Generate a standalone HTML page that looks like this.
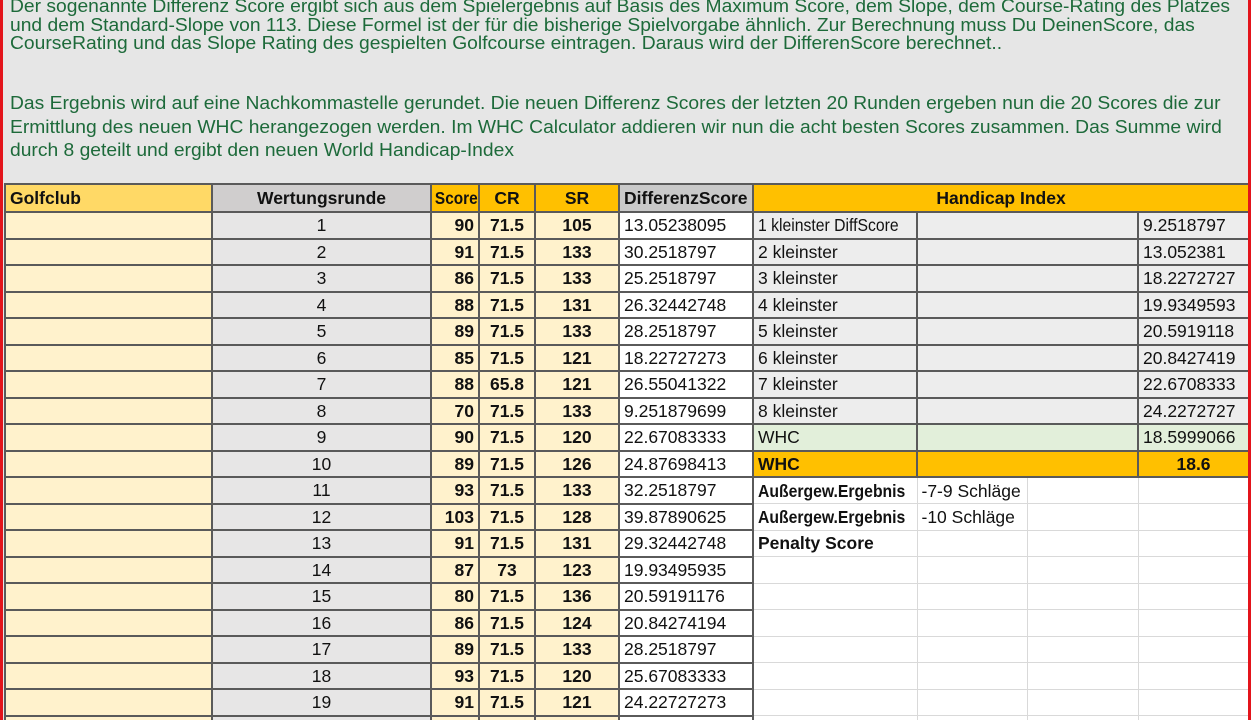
<!DOCTYPE html>
<html><head><meta charset="utf-8"><style>
html,body{margin:0;padding:0;width:1251px;height:720px;overflow:hidden;background:#e6e6e6;position:relative;font-family:"Liberation Sans",Arial,sans-serif}
.red{position:absolute;top:0;bottom:0;width:3px;background:#e3141b;z-index:5}
.t{position:absolute;left:10px;color:#1d6a3a;font-size:18px;white-space:nowrap;line-height:19px;transform-origin:0 0;transform:scaleX(1.07)}
table{position:absolute;left:4px;top:183px;border-collapse:collapse;table-layout:fixed;width:1244px}
td{border:2px solid #5a5a5a;padding:0 4px;height:24.5px;font-size:17.5px;white-space:nowrap;overflow:hidden;line-height:20px;color:#111;vertical-align:middle}
tr.h td{height:26px;font-weight:bold}
.y{background:#fff2cc}.g{background:#e7e6e6}.w{background:#fff}.o{background:#ffc000}.lg{background:#ededed}.gr{background:#e2efda}
.c{text-align:center}.r{text-align:right}.b{font-weight:bold}
td.l{border-color:#d9d9d9;border-width:1px;background:#fff}
.n{display:inline-block;transform-origin:0 50%;transform:scaleX(.9)}
.nc{display:inline-block;transform:scaleX(.88)}
</style></head><body>
<div class="red" style="left:0"></div><div class="red" style="left:1248px"></div>
<div class="t" style="top:-3px">Der sogenannte Differenz Score ergibt sich aus dem Spielergebnis auf Basis des Maximum Score, dem Slope, dem Course-Rating des Platzes</div>
<div class="t" style="top:16px">und dem Standard-Slope von 113. Diese Formel ist der für die bisherige Spielvorgabe ähnlich. Zur Berechnung muss Du DeinenScore, das</div>
<div class="t" style="top:34px">CourseRating und das Slope Rating des gespielten Golfcourse eintragen. Daraus wird der DifferenScore berechnet..</div>
<div class="t" style="top:94px">Das Ergebnis wird auf eine Nachkommastelle gerundet. Die neuen Differenz Scores der letzten 20 Runden ergeben nun die 20 Scores die zur</div>
<div class="t" style="top:118px">Ermittlung des neuen WHC herangezogen werden. Im WHC Calculator addieren wir nun die acht besten Scores zusammen. Das Summe wird</div>
<div class="t" style="top:141px">durch 8 geteilt und ergibt den neuen World Handicap-Index</div>
<table>
<colgroup><col style="width:207px"><col style="width:219px"><col style="width:48px"><col style="width:56px"><col style="width:84px"><col style="width:134px"><col style="width:164px"><col style="width:110px"><col style="width:111px"><col style="width:111px"></colgroup>
<tr class="h"><td style="background:#ffd966">Golfclub</td><td class="c" style="background:#d0cece">Wertungsrunde</td><td class="o c" style="padding:0"><span class="nc">Score</span></td><td class="o c">CR</td><td class="o c">SR</td><td style="background:#c9c9c9">DifferenzScore</td><td class="o c" colspan="4">Handicap Index</td></tr>
<tr><td class="y"></td><td class="g c">1</td><td class="y r b">90</td><td class="y c b">71.5</td><td class="y c b">105</td><td class="w">13.05238095</td><td class="lg"><span class="n">1 kleinster DiffScore</span></td><td class="lg" colspan="2"></td><td class="lg">9.2518797</td></tr>
<tr><td class="y"></td><td class="g c">2</td><td class="y r b">91</td><td class="y c b">71.5</td><td class="y c b">133</td><td class="w">30.2518797</td><td class="lg">2 kleinster</td><td class="lg" colspan="2"></td><td class="lg">13.052381</td></tr>
<tr><td class="y"></td><td class="g c">3</td><td class="y r b">86</td><td class="y c b">71.5</td><td class="y c b">133</td><td class="w">25.2518797</td><td class="lg">3 kleinster</td><td class="lg" colspan="2"></td><td class="lg">18.2272727</td></tr>
<tr><td class="y"></td><td class="g c">4</td><td class="y r b">88</td><td class="y c b">71.5</td><td class="y c b">131</td><td class="w">26.32442748</td><td class="lg">4 kleinster</td><td class="lg" colspan="2"></td><td class="lg">19.9349593</td></tr>
<tr><td class="y"></td><td class="g c">5</td><td class="y r b">89</td><td class="y c b">71.5</td><td class="y c b">133</td><td class="w">28.2518797</td><td class="lg">5 kleinster</td><td class="lg" colspan="2"></td><td class="lg">20.5919118</td></tr>
<tr><td class="y"></td><td class="g c">6</td><td class="y r b">85</td><td class="y c b">71.5</td><td class="y c b">121</td><td class="w">18.22727273</td><td class="lg">6 kleinster</td><td class="lg" colspan="2"></td><td class="lg">20.8427419</td></tr>
<tr><td class="y"></td><td class="g c">7</td><td class="y r b">88</td><td class="y c b">65.8</td><td class="y c b">121</td><td class="w">26.55041322</td><td class="lg">7 kleinster</td><td class="lg" colspan="2"></td><td class="lg">22.6708333</td></tr>
<tr><td class="y"></td><td class="g c">8</td><td class="y r b">70</td><td class="y c b">71.5</td><td class="y c b">133</td><td class="w">9.251879699</td><td class="lg">8 kleinster</td><td class="lg" colspan="2"></td><td class="lg">24.2272727</td></tr>
<tr><td class="y"></td><td class="g c">9</td><td class="y r b">90</td><td class="y c b">71.5</td><td class="y c b">120</td><td class="w">22.67083333</td><td class="gr">WHC</td><td class="gr" colspan="2"></td><td class="gr">18.5999066</td></tr>
<tr><td class="y"></td><td class="g c">10</td><td class="y r b">89</td><td class="y c b">71.5</td><td class="y c b">126</td><td class="w">24.87698413</td><td class="o b">WHC</td><td class="o" colspan="2"></td><td class="o c b">18.6</td></tr>
<tr><td class="y"></td><td class="g c">11</td><td class="y r b">93</td><td class="y c b">71.5</td><td class="y c b">133</td><td class="w">32.2518797</td><td class="l b"><span class="n">Außergew.Ergebnis</span></td><td class="l">-7-9 Schläge</td><td class="l"></td><td class="l"></td></tr>
<tr><td class="y"></td><td class="g c">12</td><td class="y r b">103</td><td class="y c b">71.5</td><td class="y c b">128</td><td class="w">39.87890625</td><td class="l b"><span class="n">Außergew.Ergebnis</span></td><td class="l">-10 Schläge</td><td class="l"></td><td class="l"></td></tr>
<tr><td class="y"></td><td class="g c">13</td><td class="y r b">91</td><td class="y c b">71.5</td><td class="y c b">131</td><td class="w">29.32442748</td><td class="l b">Penalty Score</td><td class="l"></td><td class="l"></td><td class="l"></td></tr>
<tr><td class="y"></td><td class="g c">14</td><td class="y r b">87</td><td class="y c b">73</td><td class="y c b">123</td><td class="w">19.93495935</td><td class="l"></td><td class="l"></td><td class="l"></td><td class="l"></td></tr>
<tr><td class="y"></td><td class="g c">15</td><td class="y r b">80</td><td class="y c b">71.5</td><td class="y c b">136</td><td class="w">20.59191176</td><td class="l"></td><td class="l"></td><td class="l"></td><td class="l"></td></tr>
<tr><td class="y"></td><td class="g c">16</td><td class="y r b">86</td><td class="y c b">71.5</td><td class="y c b">124</td><td class="w">20.84274194</td><td class="l"></td><td class="l"></td><td class="l"></td><td class="l"></td></tr>
<tr><td class="y"></td><td class="g c">17</td><td class="y r b">89</td><td class="y c b">71.5</td><td class="y c b">133</td><td class="w">28.2518797</td><td class="l"></td><td class="l"></td><td class="l"></td><td class="l"></td></tr>
<tr><td class="y"></td><td class="g c">18</td><td class="y r b">93</td><td class="y c b">71.5</td><td class="y c b">120</td><td class="w">25.67083333</td><td class="l"></td><td class="l"></td><td class="l"></td><td class="l"></td></tr>
<tr><td class="y"></td><td class="g c">19</td><td class="y r b">91</td><td class="y c b">71.5</td><td class="y c b">121</td><td class="w">24.22727273</td><td class="l"></td><td class="l"></td><td class="l"></td><td class="l"></td></tr>
<tr><td class="y"></td><td class="g c">20</td><td class="y r b">90</td><td class="y c b">71.5</td><td class="y c b">125</td><td class="w">25.55</td><td class="l"></td><td class="l"></td><td class="l"></td><td class="l"></td></tr>
</table>
</body></html>
